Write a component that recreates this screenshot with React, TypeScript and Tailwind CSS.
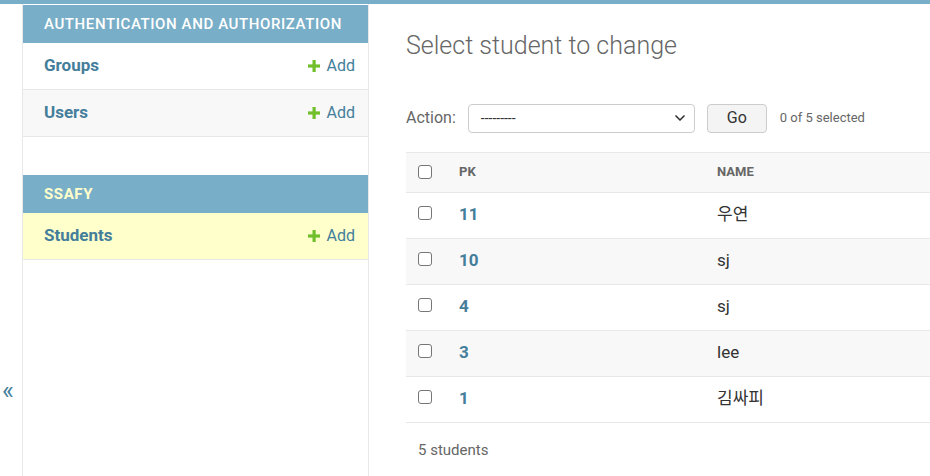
import { ChevronDown } from 'lucide-react';

const students = [
  { pk: 11, name: '우연' },
  { pk: 10, name: 'sj' },
  { pk: 4, name: 'sj' },
  { pk: 3, name: 'lee' },
  { pk: 1, name: '김싸피' },
];

function Checkbox() {
  return <span className="block h-[14px] w-[14px] rounded-[3px] border border-[#767676] bg-white" />;
}

function PlusIcon() {
  return (
    <svg className="h-[12px] w-[12px]" viewBox="0 0 12 12" fill="#70bf2b">
      <rect x="4.5" y="0" width="3.2" height="12" />
      <rect x="0" y="4.4" width="12" height="3.2" />
    </svg>
  );
}

function ModelRow({ label, striped, selected }: { label: string; striped?: boolean; selected?: boolean }) {
  const bg = selected ? 'bg-[#ffffcc]' : striped ? 'bg-[#f8f8f8]' : 'bg-white';
  return (
    <div className={`flex h-[47px] items-center justify-between border-b border-[#e8e8e8] pl-[21px] pr-[13px] ${bg}`}>
      <span className="text-[17px] font-bold text-[#447e9b]">{label}</span>
      <span className="flex items-center gap-[7px] text-[16px] text-[#447e9b]">
        <PlusIcon />
        Add
      </span>
    </div>
  );
}

export default function App() {
  return (
    <div className="h-[476px] overflow-hidden border-t-4 border-[#79aec8] bg-white font-['Roboto','Noto_Sans_CJK_KR',sans-serif]">
      <div className="flex h-full">
        {/* collapse toggle */}
        <div className="w-[23px] shrink-0 border-r border-[#e8e8e8] pl-[2px] pt-[374px]">
          <span className="text-[25px] leading-none text-[#447e9b]">«</span>
        </div>

        {/* nav sidebar */}
        <nav className="w-[346px] shrink-0 border-r border-[#e8e8e8] pt-px">
          <div className="flex h-[38px] items-center bg-[#79aec8] pl-[21px] text-[15px] font-medium tracking-[0.6px] text-white">
            AUTHENTICATION AND AUTHORIZATION
          </div>
          <ModelRow label="Groups" />
          <ModelRow label="Users" striped />

          <div className="mt-[38px] flex h-[38px] items-center bg-[#79aec8] pl-[21px] text-[15px] font-bold tracking-[0.6px] text-[#ffffcc]">
            SSAFY
          </div>
          <ModelRow label="Students" selected />
        </nav>

        {/* content */}
        <main className="min-w-0 flex-1 overflow-hidden pl-[37px] pt-[23px]">
          <h1 className="text-[25px] font-light text-[#666]">Select student to change</h1>

          <div className="mt-[39px] flex items-center text-[16px] text-[#666]">
            <span>Action:</span>
            <div className="ml-[12px] flex h-[29px] w-[227px] items-center justify-between rounded-[4px] border border-[#ccc] bg-white pl-[12px] pr-[6px] text-[14px] text-[#333]">
              <span>---------</span>
              <ChevronDown className="h-[16px] w-[16px] text-[#333]" strokeWidth={2.5} />
            </div>
            <button className="ml-[12px] h-[29px] w-[60px] rounded-[4px] border border-[#ccc] bg-[#f4f4f4] text-[16px] text-[#333]">
              Go
            </button>
            <span className="ml-[13px] text-[13px] text-[#666]">0 of 5 selected</span>
          </div>

          <table className="mt-[19px] w-[600px] border-collapse text-left">
            <thead>
              <tr className="h-[40px] border-y border-[#e8e8e8] bg-[#f8f8f8] text-[13px] font-bold uppercase text-[#666]">
                <th className="w-[41px] pl-[12px]">
                  <Checkbox />
                </th>
                <th className="w-[259px] pl-[12px]">PK</th>
                <th className="pl-[11px]">NAME</th>
              </tr>
            </thead>
            <tbody>
              {students.map((s, i) => (
                <tr
                  key={s.pk}
                  className={`h-[46px] border-b border-[#e8e8e8] ${i % 2 === 1 ? 'bg-[#f8f8f8]' : 'bg-white'}`}
                >
                  <td className="pl-[12px] align-top pt-[13px]">
                    <Checkbox />
                  </td>
                  <td className="pl-[12px] text-[17px] font-bold text-[#447e9b]">{s.pk}</td>
                  <td className="pl-[11px] text-[17px] text-[#333]">{s.name}</td>
                </tr>
              ))}
            </tbody>
          </table>

          <p className="pl-[12px] pt-[16px] text-[15px] text-[#666]">5 students</p>
        </main>
      </div>
    </div>
  );
}
